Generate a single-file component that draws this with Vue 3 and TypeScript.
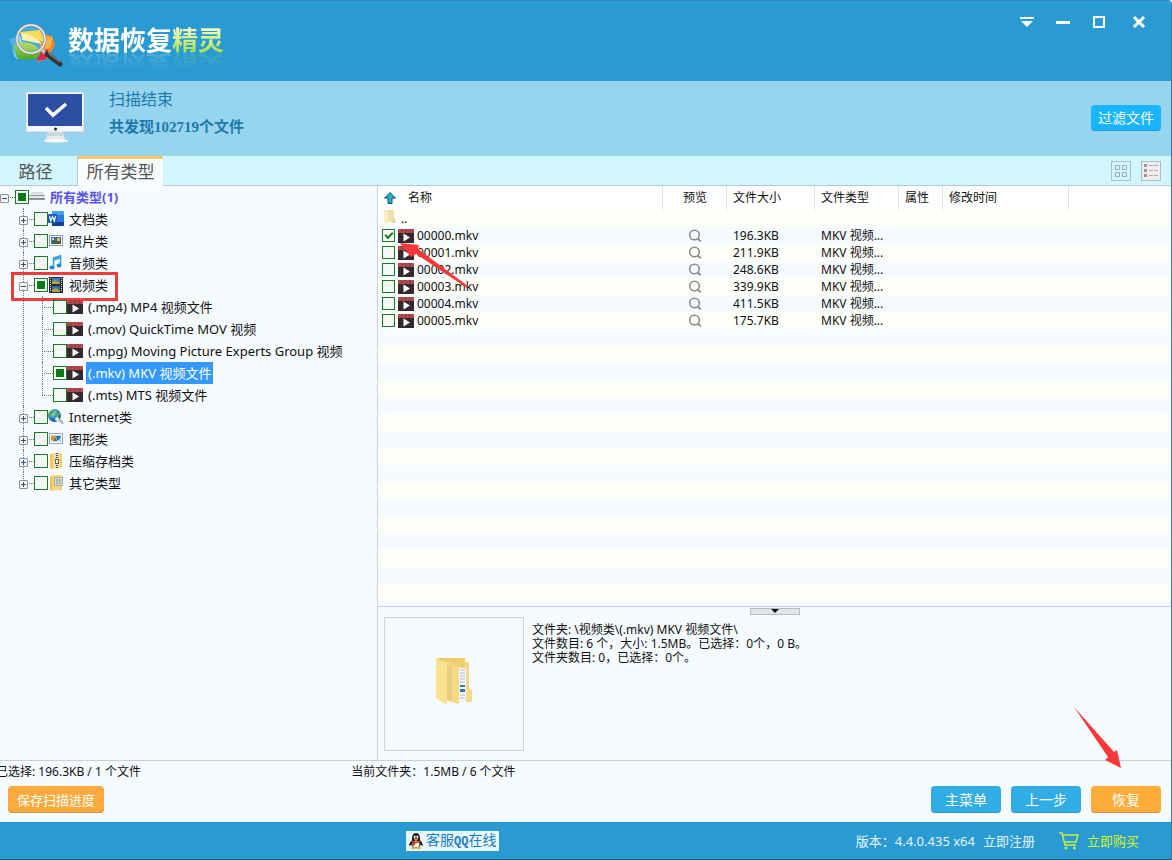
<script setup lang="ts">
import { ref } from 'vue'

type CheckState = 'off' | 'partial'

interface TypeNode {
  id: string
  label: string
  icon: string
  state: CheckState
  open?: boolean
  marked?: boolean
  children?: TypeNode[]
}

interface FileRow {
  name: string
  size: string
  type: string
  checked: boolean
}

const categories = ref<TypeNode[]>([
  { id: 'doc', label: '文档类', icon: 'word', state: 'off' },
  { id: 'photo', label: '照片类', icon: 'photo', state: 'off' },
  { id: 'audio', label: '音频类', icon: 'audio', state: 'off' },
  {
    id: 'video', label: '视频类', icon: 'film', state: 'partial', open: true, marked: true,
    children: [
      { id: 'mp4', label: '(.mp4) MP4 视频文件', icon: 'clip', state: 'off' },
      { id: 'mov', label: '(.mov) QuickTime MOV 视频', icon: 'clip', state: 'off' },
      { id: 'mpg', label: '(.mpg) Moving Picture Experts Group 视频', icon: 'clip', state: 'off' },
      { id: 'mkv', label: '(.mkv) MKV 视频文件', icon: 'clip', state: 'partial' },
      { id: 'mts', label: '(.mts) MTS 视频文件', icon: 'clip', state: 'off' },
    ],
  },
  { id: 'net', label: 'Internet类', icon: 'globe', state: 'off' },
  { id: 'graphic', label: '图形类', icon: 'graphic', state: 'off' },
  { id: 'zip', label: '压缩存档类', icon: 'zip', state: 'off' },
  { id: 'other', label: '其它类型', icon: 'other', state: 'off' },
])

const selected = ref('mkv')

const files = ref<FileRow[]>([
  { name: '00000.mkv', size: '196.3KB', type: 'MKV 视频...', checked: true },
  { name: '00001.mkv', size: '211.9KB', type: 'MKV 视频...', checked: false },
  { name: '00002.mkv', size: '248.6KB', type: 'MKV 视频...', checked: false },
  { name: '00003.mkv', size: '339.9KB', type: 'MKV 视频...', checked: false },
  { name: '00004.mkv', size: '411.5KB', type: 'MKV 视频...', checked: false },
  { name: '00005.mkv', size: '175.7KB', type: 'MKV 视频...', checked: false },
])
</script>

<template>
  <div class="window">
    <svg class="defs" width="0" height="0" aria-hidden="true">
      <defs>
        <linearGradient id="g-folder" x1="0" x2="1">
          <stop offset="0" stop-color="#fbe49a" /><stop offset="1" stop-color="#f3cf6a" />
        </linearGradient>
        <radialGradient id="g-globe" cx="0.35" cy="0.3" r="0.8">
          <stop offset="0" stop-color="#b5e2f7" /><stop offset="0.5" stop-color="#2d86c4" /><stop offset="1" stop-color="#0f4a86" />
        </radialGradient>
        <linearGradient id="g-green" x1="0" y1="0" x2="0" y2="1">
          <stop offset="0" stop-color="#a6d94a" /><stop offset="1" stop-color="#4fa52a" />
        </linearGradient>
        <symbol id="i-clip" viewBox="0 0 16 16">
          <rect x="0" y="1" width="16" height="14" fill="#33292e" />
          <rect x="0" y="1" width="16" height="4" fill="#b4494c" />
          <path d="M3 1l1.500 2L3 5M7 1l1.500 2L7 5M11 1l1.500 2L11 5" stroke="#8a383d" fill="none" />
          <path d="M5.500 5.500l6.500 4-6.500 4z" fill="#fff" />
        </symbol>
        <symbol id="i-word" viewBox="0 0 16 16">
          <rect x="4" y="0" width="12" height="15" rx="1" fill="#2b7cd3" />
          <path d="M4 0h11l1 1v3H4z" fill="#41a5ee" />
          <path d="M4 11h12v3l-1 1H4z" fill="#103f91" />
          <rect x="0" y="3" width="9" height="9" rx="1" fill="#185abd" />
          <path d="M1.500 5l1.200 5 1.800-4.500L6.300 10l1.200-5" stroke="#fff" stroke-width="1.200" fill="none" />
        </symbol>
        <symbol id="i-photo" viewBox="0 0 16 16">
          <rect x="1.500" y="2.500" width="13" height="10" fill="#fff" stroke="#8b98aa" />
          <rect x="3" y="4" width="10" height="7" fill="#3c6aa8" />
          <path d="M3 11l3-4 3 2 4-1v3z" fill="#46602a" />
          <rect x="9" y="5" width="3" height="3" fill="#e2b53d" />
          <rect x="4" y="5" width="2" height="2" fill="#e8d9b0" />
        </symbol>
        <symbol id="i-audio" viewBox="0 0 16 16">
          <path d="M5.500 12V3L12.500 1V10" fill="none" stroke="#2d9be0" stroke-width="1.500" />
          <path d="M5 2.500L13 0v3.500L5 6z" fill="#3aa6e6" />
          <ellipse cx="4" cy="12.500" rx="2.600" ry="2" fill="#1f86cf" />
          <ellipse cx="11" cy="10.500" rx="2.400" ry="1.900" fill="#1f86cf" />
        </symbol>
        <symbol id="i-film" viewBox="0 0 16 16">
          <rect x="1" y="0" width="14" height="16" fill="#2a2a2c" />
          <rect x="4" y="1" width="8" height="6" fill="#3c7cc0" />
          <rect x="4" y="9" width="8" height="6" fill="#3570b4" />
          <path d="M4 5l3-2 5 3v1H4zM4 13l4-2 4 3v1H4z" fill="#b5a23b" />
          <path d="M2.500 1v14M13.500 1v14" stroke="#e8e8e8" stroke-width="1" stroke-dasharray="1 1" />
        </symbol>
        <symbol id="i-globe" viewBox="0 0 16 16">
          <circle cx="6.500" cy="6.500" r="6.500" fill="url(#g-globe)" />
          <path d="M2.500 2c2-1 4-1 4 0s-1 2-2 3-3 1-3 3c-2-2-1-5 1-6zM8 4c2-1 4-1 4 1-1 2-2 4-3 4-1-1-2-3-1-5z" fill="#4fae4a" />
          <path d="M8.500 10.500l4 1 2.500 3.500" stroke="#a9b7c4" stroke-width="2.500" fill="none" />
          <circle cx="9" cy="10" r="2" fill="#dbe7f0" />
        </symbol>
        <symbol id="i-graphic" viewBox="0 0 16 16">
          <rect x="1.500" y="2.500" width="13" height="10" fill="#fff" stroke="#9aa6b5" />
          <rect x="3" y="4" width="10" height="7" fill="#bcd9ee" />
          <rect x="3" y="5" width="5" height="4" fill="#c99a35" />
          <path d="M8 5h5l-2 4H9z" fill="#2f6fb5" />
          <path d="M5 10l3-3 1 3z" fill="#466f3c" />
        </symbol>
        <symbol id="i-zip" viewBox="0 0 16 16">
          <path d="M2 1l3-1h9v15l-9 1-3-1z" fill="url(#g-folder)" />
          <path d="M2 1l3 1v14l-3-1z" fill="#efc75f" />
          <rect x="7" y="0" width="4" height="15" fill="#d8d8d0" />
          <path d="M9 0v15" stroke="#555" stroke-width="2" stroke-dasharray="1 1" />
          <rect x="7.500" y="6.500" width="3" height="4" fill="#eee" stroke="#666" />
        </symbol>
        <symbol id="i-other" viewBox="0 0 16 16">
          <path d="M2 1l3-1h9v15l-9 1-3-1z" fill="url(#g-folder)" />
          <path d="M2 1l3 1v14l-3-1z" fill="#efc75f" />
          <rect x="6.500" y="2.500" width="8" height="8" fill="#fff" stroke="#a9a58c" />
          <path d="M8 4h2v2H8zM11 4h2v2h-2zM8 7h2v2H8zM11 7h2v2h-2z" fill="none" stroke="#7f8a97" stroke-width="0.800" />
        </symbol>
        <symbol id="i-search" viewBox="0 0 14 14">
          <circle cx="6.500" cy="6" r="4.800" fill="none" stroke="#8c8c8c" stroke-width="1.600" />
          <path d="M9.800 9.500l3 2.800" stroke="#8c8c8c" stroke-width="1.800" />
        </symbol>
      </defs>
    </svg>

    <header class="titlebar">
      <svg class="logo" viewBox="0 0 56 48" aria-hidden="true">
        <path d="M3 18l9-5 6 22-9 2-3-3z" fill="#8fd0f2" />
        <path d="M1 17l6-2 5 21-4-2z" fill="#54aee8" />
        <path d="M34 12l10 2 3 9-8 14-10 3z" fill="#f0862c" />
        <path d="M38 14l7 2-3 10-6 2z" fill="#fbb24a" />
        <path d="M30 31l10-4-2 10-9 2z" fill="#d8285a" />
        <path d="M6 23c8-5 20-3 27 6l-3 7c-6 2-15 2-21 0z" fill="url(#g-green)" />
        <path d="M12 10l20-2 7 14c-6-4-14-6-24-4z" fill="#f7d33c" />
        <path d="M14 11c7 1 16 5 20 11l-20-4z" fill="#fbf0a0" />
        <circle cx="23" cy="17" r="14" fill="#fff" fill-opacity="0.150" stroke="#8d9299" stroke-width="3" />
        <circle cx="23" cy="17" r="14" fill="none" stroke="#eceff1" stroke-width="1.500" />
        <path d="M33 27l6 6" stroke="#c6cacd" stroke-width="3" />
        <path d="M39 32l13 10" stroke="#33302f" stroke-width="5" stroke-linecap="round" />
        <path d="M40 31l12 9" stroke="#8b8480" stroke-width="1.500" />
      </svg>
      <h1 class="brand">数据恢复<span class="brand-accent">精灵</span></h1>
      <div class="controls">
        <button type="button" aria-label="菜单">
          <svg viewBox="0 0 24 24"><path d="M5 7h14v2H5zM6 11h12l-6 6z" fill="#fff" /></svg>
        </button>
        <button type="button" aria-label="最小化">
          <svg viewBox="0 0 24 24"><path d="M5 11h14v3H5z" fill="#fff" /></svg>
        </button>
        <button type="button" aria-label="最大化">
          <svg viewBox="0 0 24 24"><rect x="7" y="7" width="10" height="10" fill="none" stroke="#fff" stroke-width="2" /></svg>
        </button>
        <button type="button" aria-label="关闭" class="close">
          <svg viewBox="0 0 24 24"><path d="M7 7l10 10M17 7L7 17" stroke="#fff" stroke-width="3" /></svg>
        </button>
      </div>
    </header>

    <section class="summary">
      <svg class="monitor" viewBox="0 0 60 52" aria-hidden="true">
        <path d="M23 40h15l2 8H21z" fill="#e6edf1" />
        <path d="M19 48q11-2 24 0v1.500q-12 2-24 0z" fill="#f7f9fa" />
        <path d="M23 41h15l1 3H22z" fill="#cbd7de" />
        <rect x="1" y="0" width="58" height="40" rx="1" fill="#f4f7f8" stroke="#a9b9c4" stroke-width="0.500" />
        <rect x="3" y="2" width="54" height="32" fill="#2c4fa3" />
        <circle cx="30.500" cy="37" r="1.500" fill="#222" />
        <path d="M21 16l7 7L41 12" fill="none" stroke="#fff" stroke-width="3.500" />
      </svg>
      <div class="summary-text">
        <p class="done">扫描结束</p>
        <p class="found">共发现102719个文件</p>
      </div>
      <button type="button" class="btn filter">过滤文件</button>
    </section>

    <nav class="tabs">
      <button type="button" class="tab">路径</button>
      <button type="button" class="tab active">所有类型</button>
      <div class="views">
        <button type="button" aria-label="图标视图">
          <svg viewBox="0 0 18 18"><path d="M3.500 3.500h4v4h-4zM10.500 3.500h4v4h-4zM3.500 10.500h4v4h-4zM10.500 10.500h4v4h-4z" fill="none" stroke="#9fadb2" /></svg>
        </button>
        <button type="button" aria-label="列表视图" class="current">
          <svg viewBox="0 0 18 18"><path d="M2 2h3v3H2zM2 7h3v3H2zM2 12h3v3H2z" fill="#9b9498" /><path d="M7 3.500h9M7 8.500h9M7 13.500h9" stroke="#b0a8aa" stroke-dasharray="4 1" /></svg>
        </button>
      </div>
    </nav>

    <main class="work">
      <aside class="tree">
        <div class="row">
          <span class="slot"><button type="button" class="expander open" aria-label="折叠"></button></span>
          <input id="n-root" type="checkbox" class="box" :indeterminate.prop="true">
          <svg class="icon" viewBox="0 0 16 16" aria-hidden="true">
            <path d="M1 5l2-2h11l1 3z" fill="#d9dcdf" />
            <rect x="0" y="6" width="16" height="5" rx="1" fill="#8f9499" />
            <rect x="0" y="7" width="16" height="2" fill="#e4e7e9" />
            <rect x="12" y="9" width="2" height="1" fill="#4c9a50" />
          </svg>
          <label for="n-root" class="root-label">所有类型(1)</label>
        </div>
        <ul>
          <li v-for="node in categories" :key="node.id">
            <div class="row">
              <span class="slot">
                <button type="button" class="expander" :class="{ open: node.open }" :aria-label="node.open ? '折叠' : '展开'" @click="node.open = !node.open"></button>
              </span>
              <input :id="`n-${node.id}`" type="checkbox" class="box" :indeterminate.prop="node.state === 'partial'">
              <svg class="icon" aria-hidden="true"><use :href="`#i-${node.icon}`" /></svg>
              <label :for="`n-${node.id}`">{{ node.label }}</label>
              <span v-if="node.marked" class="mark"></span>
            </div>
            <ul v-if="node.children && node.open">
              <li v-for="child in node.children" :key="child.id">
                <div class="row" @click="selected = child.id">
                  <span class="slot"></span>
                  <input :id="`n-${child.id}`" type="checkbox" class="box" :indeterminate.prop="child.state === 'partial'">
                  <svg class="icon" aria-hidden="true"><use :href="`#i-${child.icon}`" /></svg>
                  <label :for="`n-${child.id}`" :class="{ selected: selected === child.id }">{{ child.label }}</label>
                </div>
              </li>
            </ul>
          </li>
        </ul>
      </aside>

      <section class="content">
        <div class="list">
          <table>
            <colgroup>
              <col class="c-name"><col class="c-preview"><col class="c-size"><col class="c-type"><col class="c-attr"><col class="c-time"><col>
            </colgroup>
            <thead>
              <tr>
                <th>
                  <span class="name-head">
                    <svg class="up" viewBox="0 0 12 12" aria-hidden="true"><path d="M6 0.500l5.500 5.500H8v5.500H4V6H0.500z" fill="#20b8c4" stroke="#0d4f66" /></svg>
                    名称
                  </span>
                </th>
                <th class="center">预览</th>
                <th>文件大小</th>
                <th>文件类型</th>
                <th>属性</th>
                <th>修改时间</th>
                <th></th>
              </tr>
            </thead>
            <tbody>
              <tr>
                <td colspan="7">
                  <span class="parent">
                    <svg class="folder" viewBox="0 0 13 15" aria-hidden="true"><path d="M1 0h10v12H1z" fill="#efe0b0" /><path d="M1 0l4 1v14l-4-2z" fill="#f7edcb" /><path d="M11 8h1v5h-3z" fill="#e5d29a" /></svg>
                    ..
                  </span>
                </td>
              </tr>
              <tr v-for="(file, i) in files" :key="file.name">
                <td>
                  <span class="file">
                    <input :id="`f-${i}`" v-model="file.checked" type="checkbox" class="box small">
                    <svg class="icon" aria-hidden="true"><use href="#i-clip" /></svg>
                    <label :for="`f-${i}`">{{ file.name }}</label>
                    <svg v-if="i === 0" class="pointer-a" viewBox="0 0 69 46" aria-hidden="true"><path d="M0 0L19 2L18 6L68 43L67 45L16 11L11 14Z" fill="#f9383a" /></svg>
                  </span>
                </td>
                <td class="center"><svg class="search" aria-hidden="true"><use href="#i-search" /></svg></td>
                <td>{{ file.size }}</td>
                <td>{{ file.type }}</td>
                <td></td>
                <td></td>
                <td></td>
              </tr>
            </tbody>
          </table>
        </div>
        <div class="details">
          <button type="button" class="splitter" aria-label="收起详情">
            <svg viewBox="0 0 8 4"><path d="M0 0h8L4 4z" fill="#111" /></svg>
          </button>
          <div class="details-body">
            <div class="thumb">
              <svg viewBox="0 0 38 50" aria-hidden="true">
                <path d="M3 1h27v5h3v38H8z" fill="#eecb6c" />
                <path d="M30 5h4v26l3 2v12h-7z" fill="#f5d88a" />
                <path d="M20 10l11 1v34H20z" fill="#f4f6f7" />
                <path d="M25 13h5M25 16h5M25 19h5M25 22h5M25 25h5M25 38h5M25 41h5" stroke="#b4bcc5" />
                <path d="M25 28h5v2h-5zM25 32h5v3h-5z" fill="#2b7ba8" />
                <path d="M9 4l15 5v38L9 43z" fill="#f5d985" />
                <path d="M12 7l5 2v35l-5-2z" fill="#e6cf80" />
                <path d="M1 1l11 5v42L1 41z" fill="#fbe192" />
              </svg>
            </div>
            <div class="info">
              <p>文件夹: \视频类\(.mkv) MKV 视频文件\</p>
              <p>文件数目: 6 个，大小: 1.5MB。已选择：0个，0 B。</p>
              <p>文件夹数目: 0，已选择：0个。</p>
            </div>
          </div>
        </div>
      </section>
    </main>

    <div class="status">
      <span class="picked">已选择: 196.3KB / 1 个文件</span>
      <span>当前文件夹：1.5MB / 6 个文件</span>
    </div>

    <div class="actions">
      <button type="button" class="btn save">保存扫描进度</button>
      <button type="button" class="btn step">主菜单</button>
      <button type="button" class="btn step">上一步</button>
      <div class="recover-wrap">
        <button type="button" class="btn recover">恢复</button>
        <svg class="pointer-b" viewBox="0 0 48 62" aria-hidden="true"><path d="M0 0L40 45L43 43L47 61L31 53L34 50Z" fill="#f9383a" /></svg>
      </div>
    </div>

    <footer class="footer">
      <a href="#" class="qq">
        <svg viewBox="0 0 14 16" aria-hidden="true">
          <ellipse cx="7" cy="10" rx="5" ry="5" fill="#111" />
          <path d="M2 8l-2 4 1 1 2-3zM12 8l2 4-1 1-2-3z" fill="#111" />
          <ellipse cx="7" cy="5" rx="4" ry="5" fill="#111" />
          <ellipse cx="7" cy="11" rx="3.500" ry="3.500" fill="#fff" />
          <ellipse cx="5.600" cy="4" rx="1" ry="1.400" fill="#fff" /><ellipse cx="8.400" cy="4" rx="1" ry="1.400" fill="#fff" />
          <ellipse cx="7" cy="6.300" rx="2.200" ry="0.800" fill="#f4a91c" />
          <path d="M3 7.500q4 2 8 0v1.800q-3 1.200-5 0.900v2H4V9.500L3 9z" fill="#e0251b" />
          <ellipse cx="4.500" cy="15" rx="2.500" ry="1" fill="#f4a91c" /><ellipse cx="9.500" cy="15" rx="2.500" ry="1" fill="#f4a91c" />
        </svg>
        <span>客服<span class="qq-mono">QQ</span>在线</span>
      </a>
      <span class="version">版本：4.4.0.435 x64</span>
      <a href="#" class="register">立即注册</a>
      <a href="#" class="buy">
        <svg viewBox="0 0 20 18" aria-hidden="true">
          <path d="M0 1h3l3 12h11M4 3h15l-2 7H6" fill="none" stroke="#c6ee4a" stroke-width="1.500" />
          <circle cx="7" cy="16" r="1.500" fill="#c6ee4a" /><circle cx="15.500" cy="16" r="1.500" fill="#c6ee4a" />
        </svg>
        立即购买
      </a>
    </footer>
  </div>
</template>

<style>
body {
  margin: 0;
}
</style>

<style scoped>
.window {
  box-sizing: border-box;
  display: flex;
  flex-direction: column;
  min-height: 100vh;
  overflow: hidden;
  border-top: 1px solid #3089bd;
  border-right: 1px solid #2c82b4;
  border-bottom: 1px solid #14577f;
  border-top-right-radius: 4px;
  background: #f6fbff;
  color: #111;
  font-family: "Noto Sans", "Noto Sans CJK SC", sans-serif;
  font-size: 12px;
}

.defs {
  position: absolute;
}

button {
  margin: 0;
  padding: 0;
  border: 0;
  background: none;
  color: inherit;
  font-family: inherit;
  cursor: pointer;
}

svg {
  display: block;
  flex: none;
}

p,
h1,
ul {
  margin: 0;
  padding: 0;
}

a {
  text-decoration: none;
}

.titlebar {
  display: flex;
  align-items: flex-start;
  height: 80px;
  padding: 0 20px 0 8px;
  background: #2a9bd2;
}

.logo {
  width: 56px;
  height: 48px;
  margin-top: 21px;
}

.brand {
  margin: 20px 0 0 4px;
  color: #fff;
  font-size: 26px;
  font-weight: bold;
  line-height: 38px;
  -webkit-box-reflect: below -12px linear-gradient(transparent 40%, rgba(255, 255, 255, 0.25));
}

.brand-accent {
  background: linear-gradient(#f4fbc0 20%, #a8e04a 85%);
  background-clip: text;
  color: transparent;
}

.controls {
  display: flex;
  gap: 12px;
  margin: 9px 0 0 auto;
}

.controls button,
.controls svg {
  width: 24px;
  height: 24px;
}

.controls .close {
  margin-left: 4px;
}

.summary {
  display: flex;
  align-items: flex-start;
  height: 75px;
  padding: 0 10px 0 25px;
  background: #97d5ef;
}

.monitor {
  width: 60px;
  height: 52px;
  margin-top: 11px;
}

.summary-text {
  margin: 6px 0 0 24px;
  color: #1c78ab;
  font-family: "Liberation Serif", "Noto Sans CJK SC", serif;
}

.done {
  font-size: 16px;
  line-height: 26px;
}

.found {
  font-size: 15px;
  line-height: 28px;
  font-weight: bold;
}

.btn {
  border-radius: 4px;
  color: #fff;
  font-size: 14px;
  line-height: 26px;
  box-shadow: inset 0 -1px 0 rgba(0, 60, 110, 0.2);
}

.filter {
  width: 70px;
  height: 26px;
  margin: 24px 0 0 auto;
  background: #19b5fe;
}

.tabs {
  display: flex;
  height: 30px;
  background: linear-gradient(#d2f5ff 29px, #b4cbd6 29px);
}

.tab {
  width: 77px;
  padding: 0 6px 2px 0;
  border-top: 3px solid transparent;
  color: #555;
  font-size: 17px;
  line-height: 24px;
}

.tab.active {
  width: 86px;
  padding-right: 0;
  border-top-color: #f5c568;
  border-left: 1px solid #b4cbd6;
  background: #f9fdff;
}

.views {
  display: flex;
  gap: 10px;
  margin: 5px 10px 0 auto;
}

.views button {
  box-sizing: border-box;
  width: 20px;
  height: 20px;
  border: 1px solid #a9c0c8;
}

.views .current {
  background: #f3ecec;
}

.views svg {
  width: 18px;
  height: 18px;
}

.work {
  display: grid;
  flex: 1;
  grid-template-columns: 377px 1fr;
  border-bottom: 1px solid #c5d2db;
}

.tree {
  font-size: 13px;
}

.tree ul {
  padding-left: 19px;
  list-style: none;
}

.tree li {
  position: relative;
}

.tree li::before {
  position: absolute;
  top: 0;
  bottom: 0;
  left: 4px;
  border-left: 1px dotted #777;
  content: "";
}

.tree li:last-child::before {
  bottom: auto;
  height: 11px;
}

.row {
  position: relative;
  display: flex;
  align-items: center;
  height: 22px;
}

.slot {
  position: relative;
  display: flex;
  flex: none;
  align-items: center;
  width: 15px;
  height: 22px;
}

.slot::before {
  position: absolute;
  top: 11px;
  right: 0;
  left: 4px;
  border-top: 1px dotted #777;
  content: "";
}

.expander {
  position: relative;
  box-sizing: border-box;
  width: 9px;
  height: 9px;
  margin-top: 2px;
  border: 1px solid #8d939b;
  border-radius: 1px;
  background:
    linear-gradient(#34507e, #34507e) center / 5px 1px no-repeat,
    linear-gradient(#34507e, #34507e) center / 1px 5px no-repeat,
    #f4f5f6;
}

.expander.open {
  background: linear-gradient(#34507e, #34507e) center / 5px 1px no-repeat, #f4f5f6;
}

.box {
  box-sizing: border-box;
  flex: none;
  width: 14px;
  height: 14px;
  margin: 0;
  border: 1px solid #1c7a26;
  background: #f4f8f4;
  appearance: none;
}

.box:indeterminate {
  background: linear-gradient(#0b7a12, #0b7a12) center / 8px 8px no-repeat, #fff;
}

.box.small {
  display: grid;
  place-items: center;
  width: 13px;
  height: 13px;
}

.box.small:checked::before {
  width: 6px;
  height: 3px;
  margin-top: -2px;
  border-bottom: 2px solid #16751f;
  border-left: 2px solid #16751f;
  content: "";
  transform: rotate(-45deg);
}

.icon {
  width: 16px;
  height: 16px;
}

.row label {
  margin-left: 3px;
  padding: 0 2px;
  line-height: 22px;
  white-space: nowrap;
}

.row .root-label {
  color: #5a50e6;
  font-weight: bold;
}

.row .selected {
  background: #3399ff;
  color: #fff;
}

.mark {
  position: absolute;
  top: -2px;
  left: -8px;
  box-sizing: border-box;
  width: 107px;
  height: 29px;
  border: 3px solid #f03a3c;
  pointer-events: none;
}

.content {
  display: flex;
  flex-direction: column;
  min-width: 0;
  border-left: 1px solid #c5d2db;
}

.list {
  flex: 1;
  background: linear-gradient(#fffffa 17px, #f6fbff 17px) 0 24px / 100% 34px;
}

table {
  width: 100%;
  border-collapse: collapse;
  table-layout: fixed;
}

.c-name {
  width: 285px;
}

.c-preview {
  width: 64px;
}

.c-size {
  width: 88px;
}

.c-type {
  width: 84px;
}

.c-attr {
  width: 44px;
}

.c-time {
  width: 126px;
}

thead {
  background: #fff;
}

th {
  box-sizing: border-box;
  height: 24px;
  padding: 0 6px;
  background: linear-gradient(#dde4ea, #dde4ea) right / 1px 100% no-repeat;
  font-weight: normal;
  line-height: 24px;
  text-align: left;
  white-space: nowrap;
}

th:last-child {
  background: none;
}

td {
  height: 17px;
  padding: 0 6px;
  line-height: 17px;
  white-space: nowrap;
}

td:first-child {
  padding: 0 4px;
}

.center {
  text-align: center;
}

.name-head {
  display: flex;
  gap: 12px;
  align-items: center;
}

.up {
  width: 12px;
  height: 12px;
}

.parent {
  display: flex;
  gap: 5px;
  height: 17px;
  padding-left: 1px;
}

.folder {
  width: 13px;
  height: 15px;
}

.file {
  position: relative;
  display: flex;
  align-items: center;
  height: 17px;
}

.file .icon {
  margin: 0 3px;
}

.pointer-a {
  position: absolute;
  top: 16px;
  left: 18px;
  z-index: 1;
  width: 69px;
  height: 46px;
  pointer-events: none;
}

.search {
  width: 14px;
  height: 14px;
  margin: 0 auto;
}

.details {
  border-top: 1px solid #c5d2db;
}

.splitter {
  box-sizing: border-box;
  display: flex;
  justify-content: center;
  width: 50px;
  height: 7px;
  margin: 1px auto 2px;
  border: 1px solid #b6bcc1;
  background: #e3e6e9;
}

.splitter svg {
  width: 8px;
  height: 4px;
}

.details-body {
  display: flex;
  gap: 8px;
  padding: 0 6px 9px;
}

.thumb {
  box-sizing: border-box;
  display: grid;
  flex: none;
  place-items: center;
  width: 140px;
  height: 134px;
  border: 1px solid #ccd4da;
}

.thumb svg {
  width: 38px;
  height: 50px;
  margin-top: -4px;
}

.info {
  padding-top: 6px;
  line-height: 14px;
}

.status {
  display: flex;
  height: 20px;
  line-height: 22px;
}

.picked {
  box-sizing: border-box;
  width: 30%;
  margin-right: 4px;
  margin-left: -4px;
}

.actions {
  display: flex;
  gap: 10px;
  align-items: flex-start;
  height: 36px;
  padding: 5px 10px 0 8px;
}

.save {
  width: 96px;
  height: 27px;
  margin-right: auto;
  background: #fbab3b;
  font-size: 13px;
}

.step {
  width: 70px;
  height: 27px;
  background: #31ade6;
}

.recover-wrap {
  position: relative;
}

.recover {
  display: block;
  width: 70px;
  height: 27px;
  background: #fdab39;
}

.pointer-b {
  position: absolute;
  top: -79px;
  left: -17px;
  width: 48px;
  height: 62px;
  pointer-events: none;
}

.footer {
  display: flex;
  align-items: center;
  height: 37px;
  padding: 0 32px 0 406px;
  background: #2a9bd2;
  color: #e4f5ff;
  font-size: 13px;
}

.qq {
  display: flex;
  gap: 3px;
  align-items: center;
  height: 20px;
  margin-right: auto;
  padding: 0 3px;
  background: #e8f6fd;
  color: #1a7cc0;
  font-size: 14px;
  line-height: 20px;
}

.qq svg {
  width: 14px;
  height: 16px;
}

.qq-mono {
  font-family: "Liberation Mono", monospace;
  font-size: 12px;
  font-weight: bold;
}

.register {
  margin: 0 24px 0 8px;
  color: inherit;
}

.buy {
  display: flex;
  gap: 8px;
  align-items: center;
  color: #d2f51e;
}

.buy svg {
  width: 20px;
  height: 18px;
}
</style>
